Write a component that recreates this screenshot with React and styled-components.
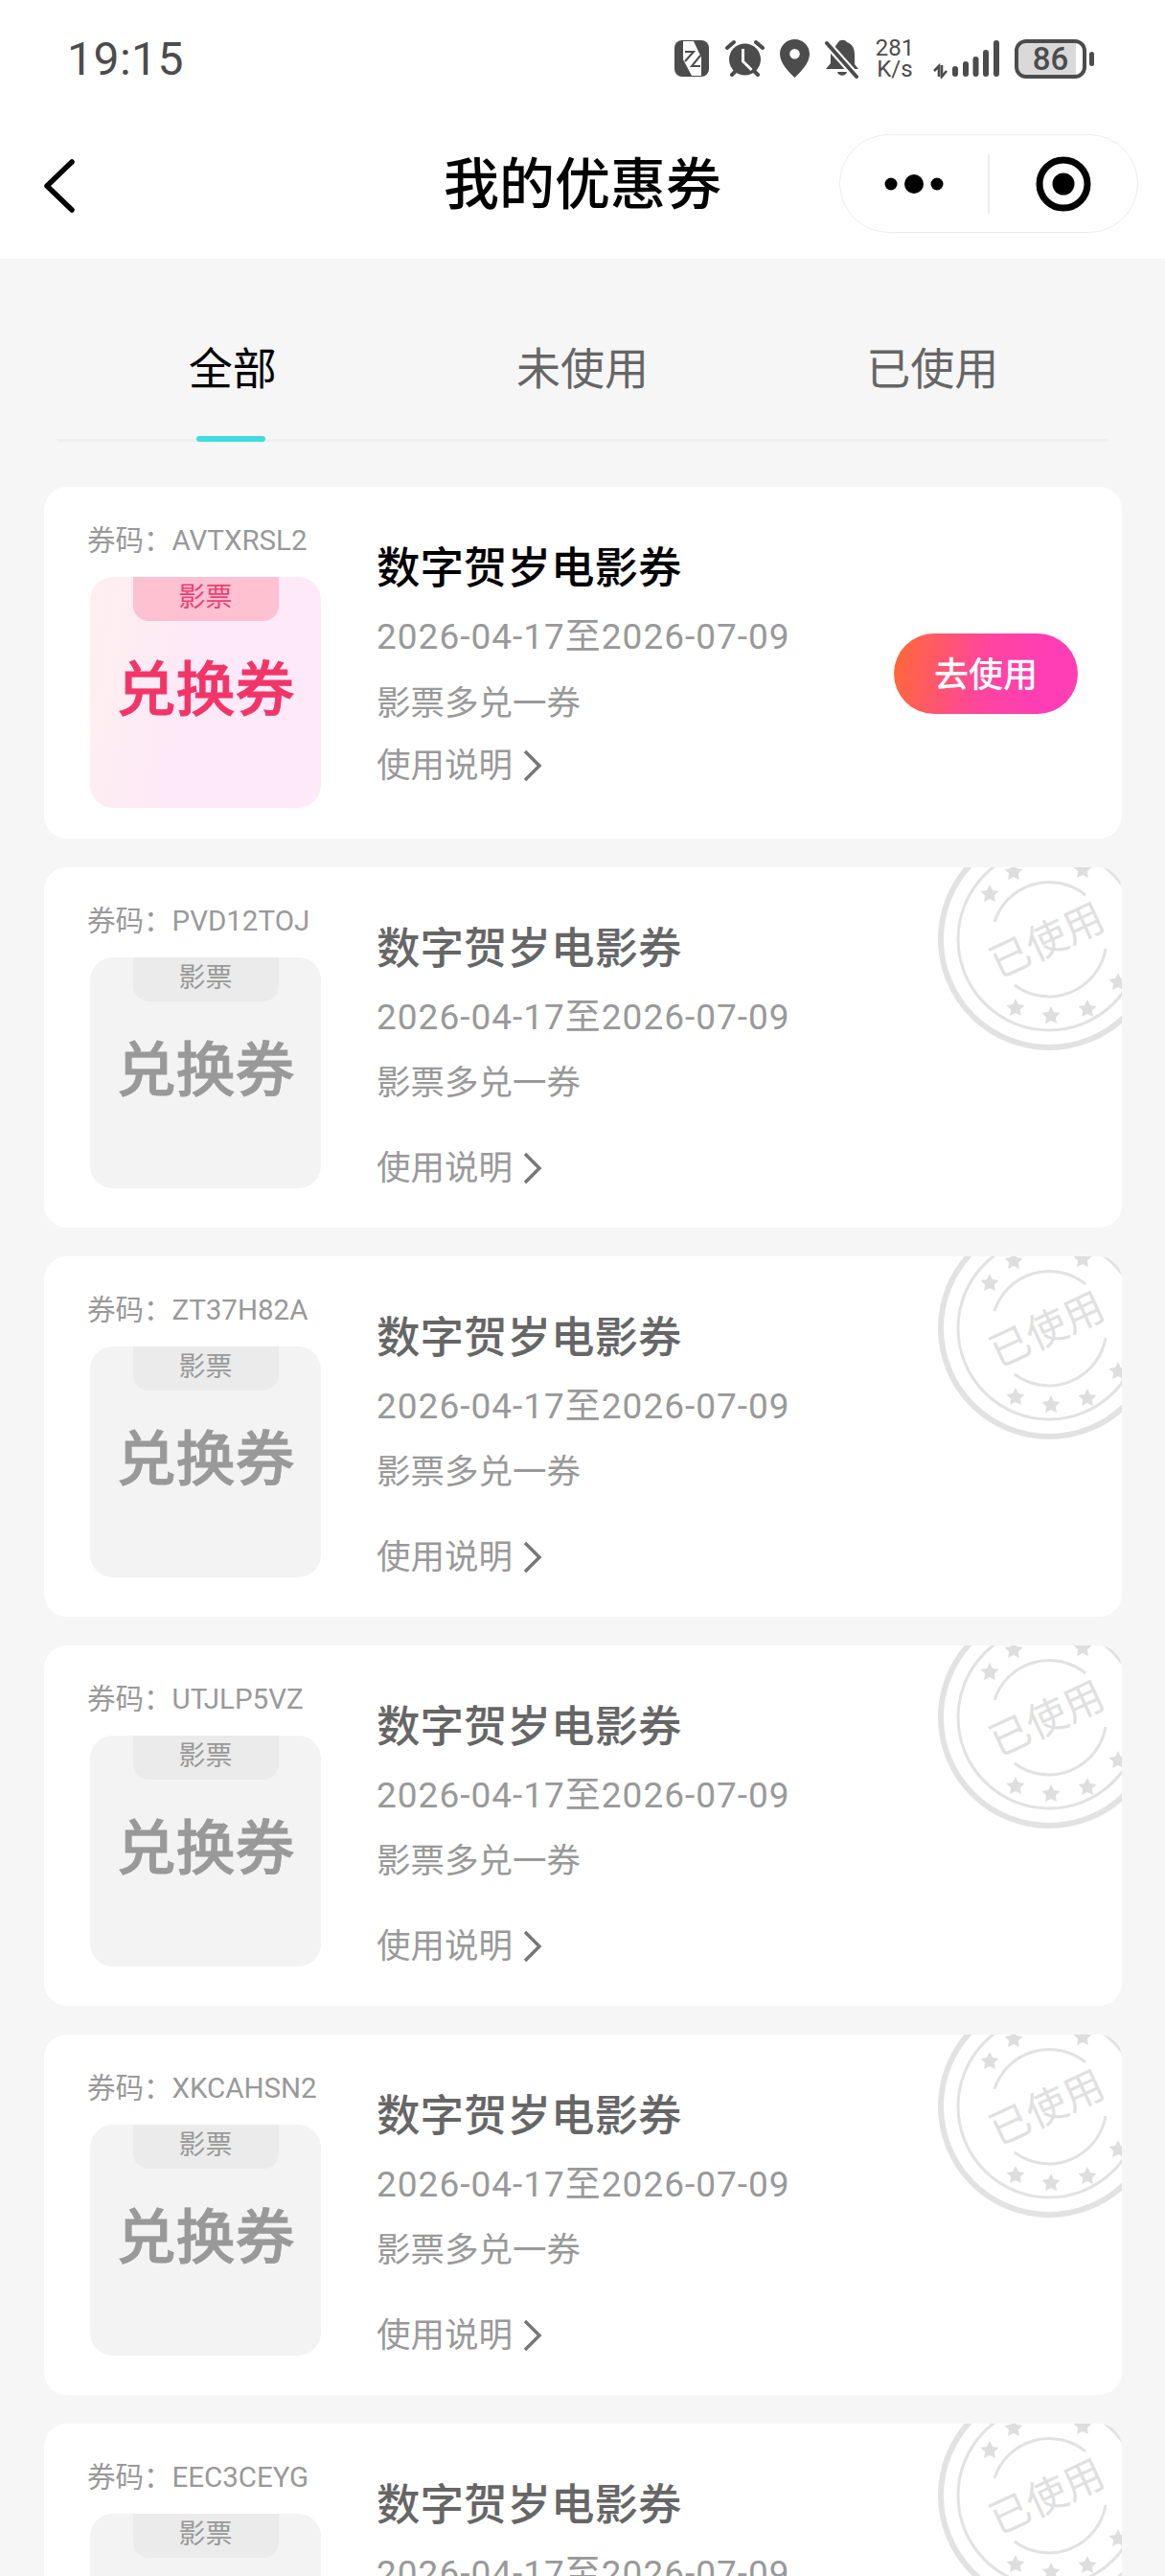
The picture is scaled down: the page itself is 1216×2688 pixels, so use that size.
import React from 'react';
import styled, { createGlobalStyle } from 'styled-components';

const GlobalStyle = createGlobalStyle`
  html, body { margin: 0; padding: 0; background: #f6f6f6; }
  * { box-sizing: border-box; }
`;

const FONT = `Roboto, "Noto Sans CJK SC", sans-serif`;

const Page = styled.div`
  width: 1216px;
  height: 2688px;
  overflow: hidden;
  background: #f6f6f6;
  font-family: ${FONT};
`;

const Header = styled.header`
  height: 270px;
  background: #fff;
`;

const StatusBar = styled.div`
  height: 122px;
  padding: 40px 82px 0 70px;
  display: flex;
  justify-content: space-between;
  align-items: flex-start;
  color: #4c4c4c;
`;

const Clock = styled.span`
  font-size: 48px;
  line-height: 44px;
  letter-spacing: 0.5px;
`;

const StatusIcons = styled.div`
  display: flex;
  align-items: center;
  height: 42px;
  color: #4c4c4c;
`;

const Speed = styled.span`
  width: 44px;
  margin: 0 17px 0 15px;
  font-size: 24px;
  line-height: 22px;
  text-align: center;
`;

const Battery = styled.span`
  width: 75px;
  height: 41px;
  margin-left: 16px;
  border: 4px solid #4c4c4c;
  border-radius: 12px;
  background: linear-gradient(90deg, #d9d9d9 90%, #fff 90%);
  background-clip: padding-box;
  font-size: 33px;
  line-height: 33px;
  font-weight: 500;
  text-align: center;
  position: relative;
  &::after {
    content: '';
    position: absolute;
    right: -12px;
    top: 9px;
    width: 5px;
    height: 15px;
    border-radius: 3px;
    background: #4c4c4c;
  }
`;

const NavBar = styled.div`
  height: 103px;
  margin-top: 18px;
  padding: 0 28px 0 46px;
  display: flex;
  align-items: center;
  justify-content: space-between;
  position: relative;
`;

const NavTitle = styled.h1`
  position: absolute;
  left: 0;
  right: 0;
  top: 2px;
  margin: 0;
  text-align: center;
  font-size: 58px;
  line-height: 103px;
  font-weight: 500;
  color: #000;
`;

const BackIcon = styled.svg`
  display: block;
  margin-top: 4px;
`;

const Capsule = styled.div`
  width: 312px;
  height: 103px;
  border: 1.5px solid #ececec;
  border-radius: 52px;
  display: flex;
  align-items: center;
  background: #fff;
  position: relative;
`;

const CapsuleSide = styled.div`
  flex: 1;
  display: flex;
  justify-content: center;
  align-items: center;
`;

const CapsuleLine = styled.div`
  width: 1.5px;
  height: 62px;
  background: #ececec;
`;

const Tabs = styled.nav`
  margin: 0 60px;
  height: 191px;
  display: grid;
  grid-template-columns: repeat(3, 1fr);
  border-bottom: 3px solid #efefef;
`;

const Tab = styled.div`
  position: relative;
  padding-top: 87px;
  text-align: center;
  font-size: 46px;
  line-height: 56px;
  color: ${p => (p.$active ? '#000' : '#666')};
  ${p => p.$active && `
    &::after {
      content: '';
      position: absolute;
      left: 50%;
      bottom: -3px;
      width: 72px;
      height: 6px;
      margin-left: -38px;
      border-radius: 3px;
      background: #3fdce0;
    }
  `}
`;

const List = styled.div`
  padding: 47px 45px 0 46px;
  display: flex;
  flex-direction: column;
  gap: 30px;
`;

const Card = styled.article`
  position: relative;
  height: ${p => (p.$active ? 367 : 376)}px;
  flex-shrink: 0;
  overflow: hidden;
  border-radius: 24px;
  background: #fff;
  display: grid;
  grid-template-columns: 348px 1fr;
`;

const Left = styled.div`
  padding: 38px 0 0 45px;
`;

const Code = styled.div`
  height: 37px;
  font-size: 29.5px;
  line-height: 37px;
  color: #999;
  white-space: nowrap;
`;

const Thumb = styled.div`
  width: 241px;
  height: 241px;
  margin: 19px 0 0 3px;
  border-radius: 24px;
  display: flex;
  flex-direction: column;
  align-items: center;
  overflow: hidden;
  background: ${p => (p.$active ? 'linear-gradient(100deg, #ffefef 0%, #fde9f8 45%, #fde9f8 100%)' : '#f3f3f3')};
`;

const Tag = styled.div`
  width: 152px;
  height: 46px;
  border-radius: 0 0 16px 16px;
  background: ${p => (p.$active ? '#fdc1d2' : '#ebebeb')};
  color: ${p => (p.$active ? '#ee3f73' : '#999')};
  font-size: 28px;
  line-height: 44px;
  text-align: center;
`;

const ThumbName = styled.div`
  margin-top: 33px;
  font-size: 62px;
  line-height: 80px;
  font-weight: 500;
  -webkit-text-stroke: 0.8px currentColor;
  color: ${p => (p.$active ? '#f23568' : '#999')};
`;

const Right = styled.div`
  padding-top: 55px;
  margin-left: -1px;
  min-width: 0;
`;

const Title = styled.div`
  font-size: 45.5px;
  line-height: 62px;
  font-weight: 500;
  color: ${p => (p.$active ? '#000' : '#666')};
`;

const DateLine = styled.div`
  margin-top: 16px;
  font-size: 37px;
  line-height: 48px;
  letter-spacing: 1px;
  color: #999;
`;

const Desc = styled.div`
  margin-top: ${p => (p.$active ? 21 : 20)}px;
  font-size: 35.5px;
  line-height: 48px;
  color: #999;
`;

const Usage = styled.div`
  margin-top: ${p => (p.$active ? 17 : 41)}px;
  display: flex;
  align-items: center;
  gap: 10px;
  font-size: 35.5px;
  line-height: 48px;
  color: #999;
`;

const UseButton = styled.button`
  position: absolute;
  right: 46px;
  top: 153px;
  width: 192px;
  height: 84px;
  border: 0;
  border-radius: 42px;
  background: linear-gradient(100deg, #ff6a33 0%, #ff45a0 50%, #ff3db5 80%);
  color: #fff;
  font-family: ${FONT};
  font-size: 36px;
  font-weight: 500;
  padding: 0 0 5px;
`;

const StampWrap = styled.div`
  position: absolute;
  top: -45px;
  right: -44px;
  width: 240px;
  height: 240px;
`;

const StatusIcon = styled.svg`
  display: block;
  margin-right: ${p => p.$gap || 0}px;
  flex-shrink: 0;
`;

const NfcIcon = () => (
  <StatusIcon $gap={17} width="36" height="38" viewBox="0 0 36 38">
    <rect x="0" y="0" width="36" height="38" rx="8" fill="#4c4c4c" />
    <path d="M9 1h11l8 17v19H18L9 20z" fill="#fff" />
    <path d="M11 12h9l-9 10M27 16l-9 11h9" fill="none" stroke="#4c4c4c" strokeWidth="2" />
  </StatusIcon>
);

const AlarmIcon = () => (
  <StatusIcon $gap={16} width="41" height="40" viewBox="0 0 41 40">
    <circle cx="20.5" cy="21" r="16.5" fill="#4c4c4c" />
    <path d="M18.5 10v13l9 9" stroke="#fff" strokeWidth="3" fill="none" />
    <path d="M2 9l7-6M39 9l-7-6M7 37l4-4M34 37l-4-4" stroke="#4c4c4c" strokeWidth="4" strokeLinecap="round" />
  </StatusIcon>
);

const PinIcon = () => (
  <StatusIcon $gap={16} width="31" height="40" viewBox="0 0 31 40">
    <path
      fillRule="evenodd"
      fill="#4c4c4c"
      d="M15.5 0C7 0 0 6.8 0 15.3c0 9.6 9.7 19.4 15.5 24.7C21.3 34.7 31 24.9 31 15.3 31 6.8 24 0 15.5 0zm0 10a5.3 5.3 0 1 1 0 10.6 5.3 5.3 0 0 1 0-10.6z"
    />
  </StatusIcon>
);

const BellIcon = () => (
  <StatusIcon width="36" height="42" viewBox="0 0 36 42">
    <path d="M14 4c2-3 7-3 9 0 6 2 8 7 8 13v10l4 5H1l5-6V15L14 4z" fill="#4c4c4c" />
    <path d="M13 35h10c-1 5-9 5-10 0z" fill="#4c4c4c" />
    <path d="M1 4l32 36" stroke="#fff" strokeWidth="8" />
    <path d="M2 5l31 35" stroke="#4c4c4c" strokeWidth="4" strokeLinecap="round" />
  </StatusIcon>
);

const SIGNAL_BARS = [[24, 29], [35, 24], [45.5, 19], [56, 12], [67, 2]];

const SignalIcon = () => (
  <StatusIcon width="70" height="42" viewBox="0 0 70 42">
    <path d="M2 34l5-5v11M10 28v12l5-6" stroke="#4c4c4c" strokeWidth="2.6" fill="none" />
    {SIGNAL_BARS.map(([x, y]) => (
      <line key={x} x1={x} x2={x} y1={y + 3} y2="37" stroke="#4c4c4c" strokeWidth="6" strokeLinecap="round" />
    ))}
  </StatusIcon>
);

const STARS = [[-37, -70], [35, -72], [-62, -47], [-35, 72], [2, 80], [40, 73], [72, 45]];

function starPoints(cx, cy, r) {
  const pts = [];
  for (let i = 0; i < 10; i++) {
    const a = -Math.PI / 2 + (i * Math.PI) / 5;
    const rad = i % 2 ? r * 0.5 : r;
    pts.push(`${(cx + rad * Math.cos(a)).toFixed(1)},${(cy + rad * Math.sin(a)).toFixed(1)}`);
  }
  return pts.join(' ');
}

const Stamp = () => (
  <StampWrap>
    <svg width="240" height="240" viewBox="-120 -120 240 240">
      <circle r="113" fill="none" stroke="#e2e2e2" strokeWidth="6" />
      <circle r="95" fill="none" stroke="#e2e2e2" strokeWidth="3" />
      <path d="M-57 -18A60 60 0 0 1 38 -46M-36 48A60 60 0 0 0 59 10" fill="none" stroke="#e2e2e2" strokeWidth="3" />
      {STARS.map(([x, y]) => (
        <polygon key={`${x}${y}`} points={starPoints(x, y, 10)} fill="#dedede" />
      ))}
      <text
        x="-2"
        y="16"
        transform="rotate(-25 -2 2)"
        textAnchor="middle"
        fontSize="42"
        fill="#e0e0e0"
        fontFamily={FONT}
      >
        已使用
      </text>
    </svg>
  </StampWrap>
);

const coupons = [
  { code: 'AVTXRSL2', active: true },
  { code: 'PVD12TOJ' },
  { code: 'ZT37H82A' },
  { code: 'UTJLP5VZ' },
  { code: 'XKCAHSN2' },
  { code: 'EEC3CEYG' },
];

const Coupon = ({ code, active }) => (
  <Card $active={active}>
    <Left>
      <Code>券码：{code}</Code>
      <Thumb $active={active}>
        <Tag $active={active}>影票</Tag>
        <ThumbName $active={active}>兑换券</ThumbName>
      </Thumb>
    </Left>
    <Right>
      <Title $active={active}>数字贺岁电影券</Title>
      <DateLine>2026-04-17至2026-07-09</DateLine>
      <Desc $active={active}>影票多兑一券</Desc>
      <Usage $active={active}>
        使用说明
        <svg width="22" height="36" viewBox="0 0 22 36">
          <path d="M3 3l15 15L3 33" fill="none" stroke="#777" strokeWidth="3.5" />
        </svg>
      </Usage>
    </Right>
    {active ? <UseButton>去使用</UseButton> : <Stamp />}
  </Card>
);

export default function App() {
  return (
    <Page>
      <GlobalStyle />
      <Header>
        <StatusBar>
          <Clock>19:15</Clock>
          <StatusIcons>
            <NfcIcon />
            <AlarmIcon />
            <PinIcon />
            <BellIcon />
            <Speed>281<br />K/s</Speed>
            <SignalIcon />
            <Battery>86</Battery>
          </StatusIcons>
        </StatusBar>
        <NavBar>
          <BackIcon width="32" height="56" viewBox="0 0 32 56">
            <path d="M29 3L3 28l26 25" fill="none" stroke="#000" strokeWidth="5.5" strokeLinecap="round" strokeLinejoin="round" />
          </BackIcon>
          <NavTitle>我的优惠券</NavTitle>
          <Capsule>
            <CapsuleSide>
              <svg width="62" height="24" viewBox="0 0 62 24">
                <circle cx="7" cy="12" r="6.5" fill="#000" />
                <circle cx="31" cy="12" r="10" fill="#000" />
                <circle cx="55" cy="12" r="6.5" fill="#000" />
              </svg>
            </CapsuleSide>
            <CapsuleLine />
            <CapsuleSide>
              <svg width="60" height="60" viewBox="0 0 60 60">
                <circle cx="30" cy="30" r="25" fill="none" stroke="#000" strokeWidth="7" />
                <circle cx="30" cy="30" r="11.5" fill="#000" />
              </svg>
            </CapsuleSide>
          </Capsule>
        </NavBar>
      </Header>
      <Tabs>
        <Tab $active>全部</Tab>
        <Tab>未使用</Tab>
        <Tab>已使用</Tab>
      </Tabs>
      <List>
        {coupons.map(c => (
          <Coupon key={c.code} code={c.code} active={c.active} />
        ))}
      </List>
    </Page>
  );
}
